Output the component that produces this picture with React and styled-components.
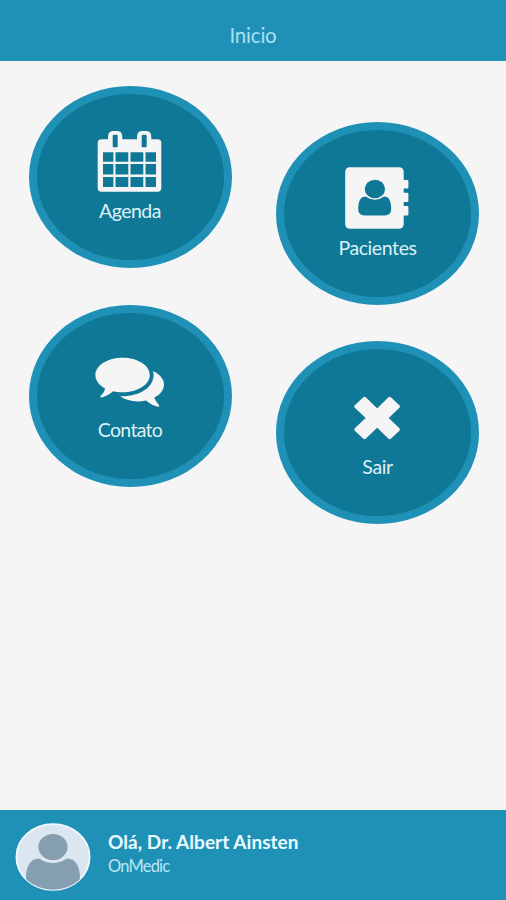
import React from 'react'
import styled, { createGlobalStyle } from 'styled-components'

const GlobalStyle = createGlobalStyle`
  * {
    box-sizing: border-box;
  }
  body {
    margin: 0;
    background: #f5f5f5;
    font-family: Lato, "Open Sans", sans-serif;
  }
`

const Screen = styled.div`
  display: flex;
  flex-direction: column;
  width: 506px;
  height: 900px;
  background: #f5f5f5;
  overflow: hidden;
`

const Header = styled.header`
  display: flex;
  align-items: center;
  justify-content: center;
  height: 61px;
  flex-shrink: 0;
  padding-top: 9px;
  background: #1f91b7;
  border-bottom: 1px solid #2c94b6;
`

const Title = styled.h1`
  margin: 0;
  font-size: 20.5px;
  font-weight: 400;
  letter-spacing: -0.2px;
  color: #a9e0f0;
`

const Menu = styled.main`
  display: flex;
  flex: 1;
  gap: 44.5px;
  padding: 24.5px 0 0 28.5px;
`

const Column = styled.div`
  display: flex;
  flex-direction: column;
  gap: 36.5px;
  padding-top: ${({ $offset }) => $offset || 0}px;
`

const RoundButton = styled.button`
  display: flex;
  flex-direction: column;
  align-items: center;
  width: 203px;
  height: 182.5px;
  padding: 36px 0 0;
  border: 8px solid #1f91b7;
  border-radius: 50%;
  background: #0f7896;
  font-family: inherit;
  cursor: pointer;
`

const IconBox = styled.span`
  display: flex;
  align-items: center;
  justify-content: center;
  height: 64px;

  svg {
    display: block;
    fill: #f5f5f5;
  }
`

const Label = styled.span`
  margin-top: 4.6px;
  font-size: 19.5px;
  line-height: 26px;
  letter-spacing: ${({ $spacing }) => $spacing || 0}px;
  color: #dcf1f7;
`

const Footer = styled.footer`
  display: flex;
  align-items: center;
  height: 90.5px;
  flex-shrink: 0;
  padding: 4px 15px 0;
  background: #1f91b7;
`

const Avatar = styled.span`
  display: block;
  width: 76px;
  height: 68px;

  svg {
    display: block;
  }
`

const UserInfo = styled.div`
  display: flex;
  flex-direction: column;
  margin-left: 17px;
  padding-bottom: 5px;
`

const UserName = styled.strong`
  font-size: 19px;
  line-height: 24px;
  letter-spacing: 0.04px;
  color: #e9fbff;
`

const Company = styled.span`
  font-size: 16.5px;
  line-height: 24px;
  letter-spacing: -0.8px;
  color: #b9e6f3;
`

const CalendarIcon = () => (
  <svg width="66" height="64" viewBox="97 130 66 64">
    <path
      fillRule="evenodd"
      d="M101.500 139.300H108V137Q108 131 113 131H117.500Q122.300 131 122.300 137V139.300H137V137Q137 131 142 131H146.500Q151.300 131 151.300 137V139.300H157.500Q161.300 139.300 161.300 143V188Q161.300 191.700 157.500 191.700H101.500Q97.700 191.700 97.700 188V143Q97.700 139.300 101.500 139.300Z
      M113.700 134.800Q112.700 134.800 112.700 136V146.300Q112.700 147.300 113.700 147.300H116.700Q117.700 147.300 117.700 146.300V136Q117.700 134.800 116.700 134.800Z
      M142.700 134.800Q141.700 134.800 141.700 136V146.300Q141.700 147.300 142.700 147.300H145.700Q146.700 147.300 146.700 146.300V136Q146.700 134.800 145.700 134.800Z
      M103 152.200h10.400v9.500H103ZM115.500 152.200h12.800v9.500h-12.800ZM130.500 152.200h12.800v9.500h-12.800ZM145.500 152.200H156v9.500h-10.500Z
      M103 164h10.400v10.500H103ZM115.500 164h12.800v10.500h-12.800ZM130.500 164h12.800v10.500h-12.800ZM145.500 164H156v10.500h-10.500Z
      M103 177h10.400v10H103ZM115.500 177h12.800v10h-12.800ZM130.500 177h12.800v10h-12.800ZM145.500 177H156v10h-10.500Z"
    />
  </svg>
)

const ContactsIcon = () => (
  <svg width="66" height="64" viewBox="344.800 166 66 64">
    <rect x="345" y="167.300" width="58.500" height="61.400" rx="4.500" />
    <path d="M402 180h5q1.200 0 1.200 1.200v6.200q0 1.200-1.200 1.200h-5ZM402 192.800h5q1.200 0 1.200 1.200v6.800q0 1.200-1.200 1.200h-5ZM402 206h5q1.200 0 1.200 1.200v7q0 1.200-1.200 1.200h-5Z" />
    <path
      fill="#0f7896"
      d="M365.500 196.500Q374.700 203 384 196.500Q391 196.500 391 209Q391 215.400 384.500 215.400H364.500Q358 215.400 358 209Q358 196.500 365.500 196.500Z"
    />
    <ellipse cx="374.700" cy="189" rx="10.200" ry="9.200" fill="#0f7896" />
  </svg>
)

const ChatIcon = () => (
  <svg width="70" height="64" viewBox="94.900 349 70 64">
    <path d="M122.500 357.700C137.500 357.700 149.700 365.400 149.700 375S137.500 392.300 122.500 392.300C119 392.300 115.800 391.900 113 391.200C109.200 394.300 105.500 396.500 101.300 397.500Q99.800 397.500 100.500 396C102.800 393.700 104.500 391.500 105 388.500C99 385.200 95.300 380.500 95.300 375C95.300 365.400 107.500 357.700 122.500 357.700Z" />
    <path d="M152.700 371C159.800 374.300 163.900 379 163.900 384.500C163.900 389.800 160.500 394.300 154.300 397.600C154.800 400.500 157 402.800 159 405.200Q159.500 407 157.800 406.800C153.500 405.700 149.800 403.500 146 400.400C136.500 402.700 126.500 400.800 120 396.200C139 397 153.500 387.500 153.500 375C153.500 373.500 153.300 372.200 152.700 371Z" />
  </svg>
)

const CloseIcon = () => (
  <svg width="48" height="64" viewBox="353.800 386 48 64">
    <path
      d="M364.300 400L377 412.300L389.500 400L397.500 407.500L385.500 419L397.500 430.500L389.500 438L377 425.700L364.300 438L356.300 430.500L368.500 419L356.300 407.500Z"
      stroke="#f5f5f5"
      strokeWidth="4.200"
      strokeLinejoin="round"
    />
  </svg>
)

const AvatarIcon = () => (
  <svg width="76" height="68" viewBox="0 0 76 68">
    <defs>
      <clipPath id="avatarClip">
        <ellipse cx="38" cy="34" rx="36.500" ry="32.800" />
      </clipPath>
    </defs>
    <ellipse cx="38" cy="34" rx="36.600" ry="32.900" fill="#dce6f0" stroke="#eef9fd" strokeWidth="1.800" />
    <g clipPath="url(#avatarClip)" fill="#859eb0">
      <path d="M24 35.500Q38 44.500 52 35.500C61 35.500 65 44 65 55V68H11V55C11 44 15 35.500 24 35.500Z" />
      <ellipse cx="38" cy="24" rx="15.500" ry="14" stroke="#dce6f0" strokeWidth="1.800" />
    </g>
  </svg>
)

function MenuButton({ icon, label, spacing }) {
  return (
    <RoundButton type="button">
      <IconBox>{icon}</IconBox>
      <Label $spacing={spacing}>{label}</Label>
    </RoundButton>
  )
}

function App() {
  return (
    <>
      <GlobalStyle />
      <Screen>
        <Header>
          <Title>Inicio</Title>
        </Header>
        <Menu>
          <Column>
            <MenuButton icon={<CalendarIcon />} label="Agenda" spacing={-0.5} />
            <MenuButton icon={<ChatIcon />} label="Contato" spacing={-0.7} />
          </Column>
          <Column $offset={36.5}>
            <MenuButton icon={<ContactsIcon />} label="Pacientes" spacing={-0.4} />
            <MenuButton icon={<CloseIcon />} label="Sair" spacing={-0.4} />
          </Column>
        </Menu>
        <Footer>
          <Avatar>
            <AvatarIcon />
          </Avatar>
          <UserInfo>
            <UserName>Olá, Dr. Albert Ainsten</UserName>
            <Company>OnMedic</Company>
          </UserInfo>
        </Footer>
      </Screen>
    </>
  )
}

export default App
